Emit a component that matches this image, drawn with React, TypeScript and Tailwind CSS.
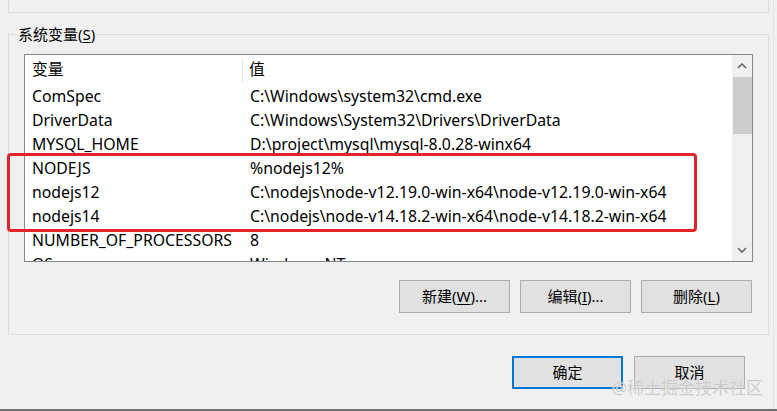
import React from "react";

const rows: [string, string][] = [
  ["ComSpec", "C:\\Windows\\system32\\cmd.exe"],
  ["DriverData", "C:\\Windows\\System32\\Drivers\\DriverData"],
  ["MYSQL_HOME", "D:\\project\\mysql\\mysql-8.0.28-winx64"],
  ["NODEJS", "%nodejs12%"],
  ["nodejs12", "C:\\nodejs\\node-v12.19.0-win-x64\\node-v12.19.0-win-x64"],
  ["nodejs14", "C:\\nodejs\\node-v14.18.2-win-x64\\node-v14.18.2-win-x64"],
  ["NUMBER_OF_PROCESSORS", "8"],
  ["OS", "Windows_NT"],
];

function Btn({ children, primary }: { children: React.ReactNode; primary?: boolean }) {
  return (
    <button
      className={
        primary
          ? "w-[111px] h-[33px] bg-[#e1e1e1] border-2 border-[#0078d7] text-[15px] text-black"
          : "w-[111px] h-[33px] bg-[#e1e1e1] border border-[#adadad] text-[15px] text-black"
      }
    >
      {children}
    </button>
  );
}

export default function App() {
  return (
    <div
      className="relative w-[777px] h-[411px] overflow-hidden bg-[#f0f0f0] text-black"
      style={{ fontFamily: '"Noto Sans", "Noto Sans CJK SC", sans-serif' }}
    >
      <div className="ml-[8px] w-[761px] h-[13px] border-x border-b border-[#dcdcdc]" />

      <fieldset className="mt-[11px] ml-[8px] w-[761px] h-[311px] border border-[#dcdcdc] px-[15px] pt-[0px]">
        <legend className="ml-[-7px] px-[1px] text-[15px] leading-[20px]">
          系统变量(<span className="underline underline-offset-2">S</span>)
        </legend>

        <div className="mt-[10px] w-[729px] h-[208px] border border-[#828790] bg-white flex overflow-hidden">
          <div className="flex-1 overflow-hidden">
            <div className="flex h-[30px] items-center text-[15.8px]">
              <div className="w-[218px] pl-[7px] h-[24px] flex items-center border-r border-[#e5e5e5]">变量</div>
              <div className="pl-[6px]">值</div>
            </div>
            {rows.map(([k, v]) => (
              <div key={k} className="flex h-[24px] items-center text-[15.8px] whitespace-nowrap">
                <div className="w-[218px] pl-[7px]">{k}</div>
                <div className="pl-[7px]">{v}</div>
              </div>
            ))}
          </div>
          <div className="w-[20px] bg-[#f0f0f0] flex flex-col items-center">
            <div className="h-[22px] flex items-center justify-center">
              <svg width="10" height="6" viewBox="0 0 10 6">
                <path d="M1 5 L5 1 L9 5" stroke="#606060" strokeWidth="1.5" fill="none" />
              </svg>
            </div>
            <div className="w-[19px] h-[57px] bg-[#cdcdcd]" />
            <div className="flex-1" />
            <div className="h-[22px] flex items-center justify-center">
              <svg width="10" height="6" viewBox="0 0 10 6">
                <path d="M1 1 L5 5 L9 1" stroke="#606060" strokeWidth="1.5" fill="none" />
              </svg>
            </div>
          </div>
        </div>

        <div className="mt-[18px] flex justify-end gap-[10px] pr-[1px]">
          <Btn>
            新建(<span className="underline underline-offset-2">W</span>)...
          </Btn>
          <Btn>
            编辑(<span className="underline underline-offset-2">I</span>)...
          </Btn>
          <Btn>
            删除(<span className="underline underline-offset-2">L</span>)
          </Btn>
        </div>
      </fieldset>

      <div className="mt-[21px] flex justify-end gap-[11px] pr-[32px]">
        <Btn primary>确定</Btn>
        <Btn>取消</Btn>
      </div>

      {/* red highlight */}
      <div className="absolute left-[7px] top-[153px] w-[690px] h-[79px] border-[3px] border-[#e0242a] rounded-[4px]" />

      {/* window edge */}
      <div className="absolute right-[3px] top-0 h-[409px] w-px bg-[#e3e3e3]" />
      <div className="absolute left-0 bottom-0 w-full h-[2px] bg-[#6f6f6f]" />

      {/* watermark */}
      <div
        className="absolute right-[14px] bottom-[14px] text-[17px] leading-[18px] text-[#c8c8c8] opacity-90"
        style={{ textShadow: "0 0 1px #ffffff" }}
      >
        @稀土掘金技术社区
      </div>
    </div>
  );
}
